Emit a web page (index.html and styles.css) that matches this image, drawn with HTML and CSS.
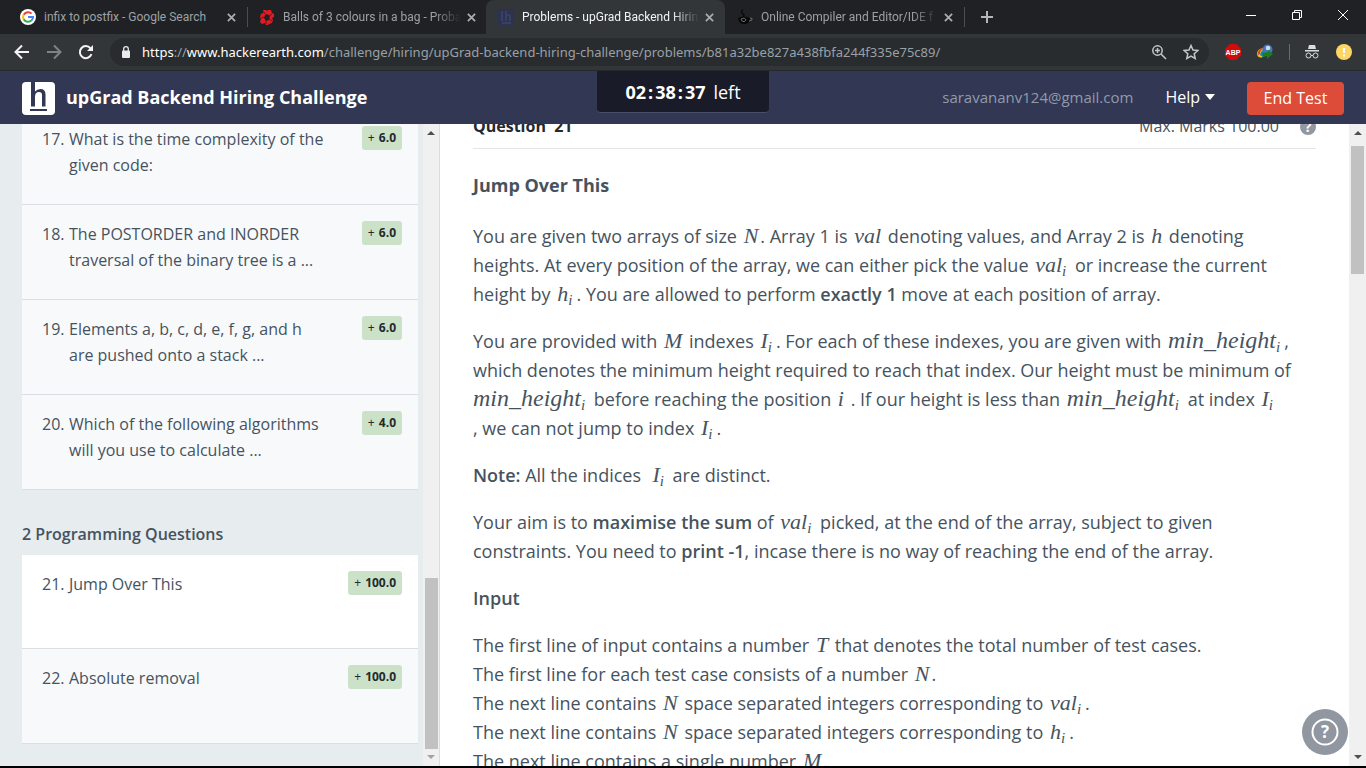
FILE: index.html
```html
<!DOCTYPE html>
<html lang="en">
<head>
<meta charset="utf-8">
<title>Problems - upGrad Backend Hiring Challenge</title>
<link rel="stylesheet" href="styles.css">
</head>
<body>
<div class="tabstrip">
  <div class="tab">
    <svg class="favicon" viewBox="0 0 16 16"><circle cx="8" cy="8" r="8" fill="#fff"/><path d="M11.6 4.6A5 5 0 0 0 3.7 5.7" fill="none" stroke="#ea4335" stroke-width="2"/><path d="M3.7 5.6a5 5 0 0 0 0 4.8" fill="none" stroke="#fbbc05" stroke-width="2"/><path d="M3.7 10.3a5 5 0 0 0 7.6 1.3" fill="none" stroke="#34a853" stroke-width="2"/><path d="M8 8h5a5 5 0 0 1-1.7 3.7" fill="none" stroke="#4285f4" stroke-width="2"/></svg>
    <span class="tab-title">infix to postfix - Google Search</span>
    <button class="tab-close" aria-label="Close tab"><svg viewBox="0 0 10 10"><path d="M1 1l8 8M9 1L1 9"/></svg></button>
  </div>
  <div class="tab divided">
    <svg class="favicon" viewBox="0 0 16 16"><path d="M4 1h3l1 1 1-1h3l1 3 2 1v3l-2 1 1 2-1 3-3 1-1 1H7l-1-2-3 1-2-2 1-3-1-2 1-3 2-1z" fill="#df1c23"/><path d="M8 5l3 2-1 4-3 1-2-3 1-3z" fill="#202124"/><path d="M4 2l2 3M13 5l-3 2M13 12l-3-2M7 15v-3M2 9l3-1" stroke="#7c0d12"/></svg>
    <span class="tab-title fade">Balls of 3 colours in a bag - Proba</span>
    <button class="tab-close" aria-label="Close tab"><svg viewBox="0 0 10 10"><path d="M1 1l8 8M9 1L1 9"/></svg></button>
  </div>
  <div class="tab active">
    <svg class="favicon" viewBox="0 0 16 16"><rect width="16" height="16" rx="2" fill="#2b3254"/><path d="M4 2v10M8 2v10M8 7q4-3 4 1v4M4 14h9" fill="none" stroke="#39415f" stroke-width="2"/></svg>
    <span class="tab-title fade">Problems - upGrad Backend Hirin</span>
    <button class="tab-close" aria-label="Close tab"><svg viewBox="0 0 10 10"><path d="M1 1l8 8M9 1L1 9"/></svg></button>
  </div>
  <div class="tab">
    <svg class="favicon" viewBox="0 0 16 16"><path d="M6 1q-3 2 0 4q2 1 0 3" fill="none" stroke="#080808" stroke-width="1.4"/><path d="M1 9q6-3 12 0q0 6-6 6q-5 0-6-6z" fill="#080808"/><path d="M13 9q3 0 2 2l-3 1M4 10q4-2 5 1q-2 3-4 1z" fill="none" stroke="#686a6c"/></svg>
    <span class="tab-title fade">Online Compiler and Editor/IDE f</span>
    <button class="tab-close" aria-label="Close tab"><svg viewBox="0 0 10 10"><path d="M1 1l8 8M9 1L1 9"/></svg></button>
  </div>
  <div class="tab-end divided"><button class="new-tab" aria-label="New tab"><svg viewBox="0 0 12 12"><path d="M6 0v12M0 6h12"/></svg></button></div>
  <div class="window-controls">
    <button aria-label="Minimize"><svg viewBox="0 0 12 12"><path d="M1 6.5h10"/></svg></button>
    <button aria-label="Restore"><svg viewBox="0 0 12 12"><path d="M1.5 3.5h7v7h-7zM3.500 3.500v-2h7v7h-2"/></svg></button>
    <button aria-label="Close"><svg viewBox="0 0 12 12"><path d="M1 1l10 10M11 1L1 11"/></svg></button>
  </div>
</div>

<div class="toolbar">
  <button class="nav" aria-label="Back"><svg viewBox="0 0 16 16"><path d="M15 8H2M8 1.500L1.500 8 8 14.500"/></svg></button>
  <button class="nav dim" aria-label="Forward"><svg viewBox="0 0 16 16"><path d="M1 8h13M8 1.500L14.500 8 8 14.500"/></svg></button>
  <button class="nav" aria-label="Reload"><svg viewBox="0 0 16 16"><path d="M13.500 10.200A6 6 0 1 1 12.500 4.300"/><path d="M15 1v6H9z" fill="#f1f3f4" stroke="none"/></svg></button>
  <div class="address">
    <svg class="lock" viewBox="0 0 10 12"><path d="M1 4.500h6a1 1 0 0 1 1 1V11a1 1 0 0 1-1 1H1a1 1 0 0 1-1-1V5.500a1 1 0 0 1 1-1z" fill="#e8eaed"/><path d="M1.700 5V3a2.300 2.300 0 0 1 4.600 0v2" fill="none" stroke="#e8eaed" stroke-width="1.300"/></svg>
    <span class="url"><b>https</b>://<b>www.hackerearth.com</b>/challenge/hiring/upGrad-backend-hiring-challenge/problems/b81a32be827a438fbfa244f335e75c89/</span>
    <button class="addr-btn" aria-label="Zoom"><svg viewBox="0 0 16 16"><circle cx="6.500" cy="6.500" r="4.700"/><path d="M10 10l5 5M4 6.500h5M6.500 4v5"/></svg></button>
    <button class="addr-btn" aria-label="Bookmark"><svg viewBox="0 0 16 16"><path d="M8 1.500l2 4.500 4.800.5-3.600 3.200 1 4.800L8 12l-4.200 2.500 1-4.800L1.200 6.500 6 6z"/></svg></button>
  </div>
  <svg class="ext" viewBox="0 0 16 16"><path d="M4.700 0h6.600L16 4.700v6.600L11.300 16H4.700L0 11.300V4.700z" fill="#d00b0b"/><text class="abp" x="8" y="11" text-anchor="middle">ABP</text></svg>
  <svg class="ext" viewBox="0 0 16 16"><path d="M6 4q-6 1-6 6q1 5 6 3z" fill="#e3c51c"/><path d="M5 4Q0 6 1 11l2-1q0-4 3-5z" fill="#d4442b"/><path d="M3 11q0-3 3-5l2 6-2 1z" fill="#1781cb"/><circle cx="10.500" cy="5.500" r="5" fill="#4774b9"/><circle cx="11" cy="4" r="2.300" fill="#c5dcf6"/><path d="M5 9l6-1V6l5 4-6 5v-3l-4 1z" fill="#18801c"/></svg>
  <span class="tool-divider"></span>
  <svg class="ext incognito" viewBox="0 0 16 16"><path d="M5 1h6l1 4H4zM1 6h14v1.500H1z" fill="#dadce0"/><circle cx="4.500" cy="11.500" r="2.500"/><circle cx="11.500" cy="11.500" r="2.500"/><path d="M7 11.500h2"/></svg>
  <svg class="ext" viewBox="0 0 16 16"><circle cx="8" cy="8" r="8" fill="#fdd663"/><path d="M8 4v5M8 10.500v2" stroke="#fff" stroke-width="2"/></svg>
</div>

<header class="site-header">
  <svg class="logo" viewBox="0 0 33 33"><rect width="33" height="33" rx="4" fill="#fff"/><path d="M9 0h4v9.500q2-2.500 5.500-2.500 5 0 5 5.500v12h-3.500V13q0-3-3-3-4 0-4 5v9.500H9V2z" fill="#323754"/><path d="M8 27h17v2H8z" fill="#323754"/></svg>
  <h1 class="challenge">upGrad Backend Hiring Challenge</h1>
  <div class="timer"><strong>02<span class="colon">:</span>38<span class="colon">:</span>37</strong><span>left</span></div>
  <span class="email">saravananv124@gmail.com</span>
  <button class="help">Help <svg viewBox="0 0 10 6"><path d="M0 0h10L5 6z" fill="#fff"/></svg></button>
  <button class="end-test">End Test</button>
</header>

<main class="panes">
  <nav class="sidebar">
    <div class="questions">
      <a class="q" href="#q17"><span class="num">17.</span><span class="name">What is the time complexity of the<br>given code:</span><span class="mark">+ <b>6.0</b></span></a>
      <a class="q" href="#q18"><span class="num">18.</span><span class="name">The POSTORDER and INORDER<br>traversal of the binary tree is a ...</span><span class="mark">+ <b>6.0</b></span></a>
      <a class="q" href="#q19"><span class="num">19.</span><span class="name">Elements a, b, c, d, e, f, g, and h<br>are pushed onto a stack ...</span><span class="mark">+ <b>6.0</b></span></a>
      <a class="q" href="#q20"><span class="num">20.</span><span class="name">Which of the following algorithms<br>will you use to calculate ...</span><span class="mark">+ <b>4.0</b></span></a>
      <h2 class="group">2 Programming Questions</h2>
      <a class="q current" href="#q21"><span class="num">21.</span><span class="name">Jump Over This</span><span class="mark">+ <b>100.0</b></span></a>
      <a class="q" href="#q22"><span class="num">22.</span><span class="name">Absolute removal</span><span class="mark">+ <b>100.0</b></span></a>
    </div>
  </nav>
  <div class="scrollbar at-end"><i class="arrow up"></i><i class="thumb"></i><i class="arrow down"></i></div>
  <article class="problem">
    <div class="problem-body">
      <div class="problem-head">
        <strong>Question &nbsp;21</strong><span class="max">Max. Marks 100.00</span>
        <svg class="hint" viewBox="0 0 16 16"><circle cx="8" cy="8" r="8" fill="#9298a1"/><text class="hint-mark" x="8" y="13" text-anchor="middle">?</text></svg>
      </div>
      <h2 class="title">Jump Over This</h2>
      <p>You are given two arrays of size <var>N</var>. Array 1 is <var>val</var> denoting values, and Array 2 is <var>h</var> denoting<br>heights. At every position of the array, we can either pick the value <var>val<sub>i</sub></var> or increase the current<br>height by <var>h<sub>i</sub></var>. You are allowed to perform <b>exactly 1</b> move at each position of array.</p>
      <p>You are provided with <var>M</var> indexes <var>I<sub>i</sub></var>. For each of these indexes, you are given with <var class="long">min_height<sub>i</sub></var>,<br>which denotes the minimum height required to reach that index. Our height must be minimum of<br><var class="long">min_height<sub>i</sub></var> before reaching the position <var>i</var> . If our height is less than <var class="long">min_height<sub>i</sub></var> at index <var>I<sub>i</sub></var><br>, we can not jump to index <var>I<sub>i</sub></var>.</p>
      <p><b>Note:</b> All the indices &nbsp;<var>I<sub>i</sub></var> are distinct.</p>
      <p>Your aim is to <b>maximise the sum</b> of <var>val<sub>i</sub></var> picked, at the end of the array, subject to given<br>constraints. You need to <b>print -1</b>, incase there is no way of reaching the end of the array.</p>
      <p><b>Input</b></p>
      <p>The first line of input contains a number <var>T</var> that denotes the total number of test cases.<br>The first line for each test case consists of a number <var>N</var>.<br>The next line contains <var>N</var> space separated integers corresponding to <var>val<sub>i</sub></var>.<br>The next line contains <var>N</var> space separated integers corresponding to <var>h<sub>i</sub></var>.<br>The next line contains a single number <var>M</var>.</p>
    </div>
    <button class="support" aria-label="Support"><svg viewBox="0 0 28 28"><circle cx="14" cy="14" r="12.500" fill="none" stroke="#fff" stroke-width="2"/><text class="support-mark" x="14" y="20" text-anchor="middle">?</text></svg></button>
  </article>
  <div class="scrollbar at-start"><i class="arrow up"></i><i class="thumb"></i><i class="arrow down"></i></div>
</main>
<div class="bottom-edge"></div>
</body>
</html>
```
FILE: styles.css
```css
* { box-sizing: border-box; }
body { margin: 0; height: 100vh; display: flex; flex-direction: column; overflow: hidden; font-family: "Open Sans", sans-serif; color: #46535e; background: #fff; }
button { border: 0; padding: 0; background: none; font-family: inherit; color: inherit; }
svg { display: block; flex: none; }

.tabstrip { height: 34px; flex: none; display: flex; background: #202124; padding-left: 8px; font-family: Roboto, "Open Sans", sans-serif; font-size: 12px; color: #9da1a6; }
.tab { width: 239px; min-width: 0; display: flex; align-items: center; padding: 0 9px 0 12px; position: relative; }
.divided { position: relative; }
.divided::before { content: ""; position: absolute; left: 0; top: 7px; height: 20px; width: 1px; background: #4a4d51; }
.active { background: #323639; color: #f1f3f4; border-radius: 8px 8px 0 0; }
.favicon { width: 16px; height: 16px; margin-right: 8px; }
.tab-title { flex: 1; white-space: nowrap; }
.fade { -webkit-mask-image: linear-gradient(to right, #000 85%, transparent); mask-image: linear-gradient(to right, #000 85%, transparent); }
.tab-close { margin-left: 4px; padding: 2px; }
.tab-close svg { width: 9px; height: 9px; stroke: #a9acb0; stroke-width: 2; }
.tab-end { display: flex; align-items: center; padding-left: 17px; }
.new-tab svg { width: 12px; height: 12px; stroke: #b4b7ba; stroke-width: 2; }
.window-controls { margin-left: auto; display: flex; height: 29px; }
.window-controls button { width: 46px; display: grid; place-items: center; }
.window-controls svg { width: 12px; height: 12px; fill: none; stroke: #fff; }

.toolbar { height: 37px; flex: none; display: flex; align-items: center; background: #323639; border-bottom: 1px solid #26282b; padding: 0 14px; }
.nav { width: 32px; flex: none; }
.nav svg { width: 16px; height: 16px; fill: none; stroke: #f1f3f4; stroke-width: 2; }
.dim svg { stroke: #7f8386; }
.address { flex: 1; min-width: 0; height: 28px; border-radius: 14px; background: #282c2f; display: flex; align-items: center; padding: 0 10px 0 12px; margin-right: 16px; }
.lock { width: 10px; height: 12px; margin-right: 10px; }
.url { flex: 1; font-family: "Noto Sans", sans-serif; font-size: 13px; color: #9aa0a6; white-space: nowrap; }
.url b { font-weight: 400; color: #fff; }
.addr-btn { margin-left: 16px; }
.addr-btn svg { width: 16px; height: 16px; fill: none; stroke: #c3c6c9; stroke-width: 1.500; }
.ext { width: 16px; height: 16px; margin-right: 16px; }
.ext:last-child { margin-right: 0; }
.abp { font: 700 7px "Liberation Sans", sans-serif; fill: #fff; }
.tool-divider { width: 1px; height: 16px; background: #686b6e; margin-right: 14px; }
.incognito circle, .incognito path:last-child { fill: none; stroke: #dadce0; }

.site-header { height: 53px; flex: none; display: flex; align-items: center; background: #323754; color: #fff; padding: 2px 22px 0; position: relative; }
.logo { width: 33px; height: 33px; margin-right: 11px; }
.challenge { margin: 0; padding-bottom: 4px; font-size: 18px; line-height: 24px; font-weight: 700; }
.timer { position: absolute; left: 50%; top: 0; width: 172px; height: 42px; transform: translateX(-50%); background: #1a1b29; border-radius: 0 0 4px 4px; border-bottom: 1px solid #4a4e68; display: flex; justify-content: center; gap: 8px; font-size: 18px; line-height: 43px; }
.colon { margin: 0 2px; }
.email { margin-left: auto; padding-bottom: 4px; font-size: 15px; color: #8f9bab; }
.help { display: flex; align-items: center; gap: 5px; margin: 0 32px; padding-bottom: 4px; font-size: 16px; }
.help svg { width: 10px; height: 6px; }
.end-test { width: 97px; height: 33px; padding-bottom: 2px; border-radius: 4px; background: #dd4b39; font-size: 16px; color: #fff; }

.panes { flex: 1; min-height: 0; display: flex; }
.sidebar { width: 423px; flex: none; background: #e7ecee; overflow: hidden; display: flex; flex-direction: column; justify-content: flex-end; padding: 0 5px 22px 22px; }
.questions { flex: none; }
.q { display: flex; align-items: flex-start; min-height: 95px; padding: 16px 16px 26px 20px; background: #f8f9fb; border-bottom: 1px solid #dcdfe1; color: #46535e; text-decoration: none; font-size: 16px; line-height: 26px; font-weight: 500; }
.q.current { background: #fff; min-height: 94px; }
.num { width: 27px; flex: none; }
.name { flex: 1; white-space: nowrap; }
.mark { height: 24px; padding: 0 6px; border-radius: 3px; background: #cbe2c8; color: #24292e; font-size: 12px; line-height: 24px; }
.mark b { font-weight: 700; margin-left: 1px; }
.group { margin: 0; padding: 32px 0 9px; font-size: 16px; line-height: 24px; font-weight: 600; }

.scrollbar { width: 17px; flex: none; display: flex; flex-direction: column; align-items: center; background: #f0f0f0; padding: 7px 0; border-right: 1px solid #dcdcdc; }
.thumb { width: 13px; background: #c1c1c1; }
.arrow { border: 4px solid transparent; width: 0; height: 0; }
.up { border-top: 0; border-bottom-color: #505050; }
.down { border-bottom: 0; border-top-color: #505050; }
.at-end .thumb { margin-top: auto; margin-bottom: 6px; height: 171px; }
.at-end .down { border-top-color: #a3a3a3; }
.at-start { border-right: 0; }
.at-start .thumb { margin-top: 11px; margin-bottom: auto; height: 128px; }

.problem { flex: 1; min-width: 0; overflow: hidden; position: relative; padding: 0 33px; }
.problem-body { margin-top: -10px; font-size: 18px; line-height: 29px; }
.problem-head { display: flex; align-items: center; height: 35px; padding-bottom: 9px; border-bottom: 1px solid #e5e5e5; font-size: 16px; color: #24292e; }
.max { margin-left: auto; color: #46535e; }
.hint { width: 16px; height: 16px; margin-left: 21px; }
.hint-mark { font: 700 14px "Open Sans", sans-serif; fill: #fff; }
.title { margin: 22px 0; font-size: 18px; line-height: 29px; font-weight: 700; }
.problem p { margin: 0 0 18px; white-space: nowrap; }
.problem b { font-weight: 600; }
.problem var { font-family: "Liberation Serif", serif; font-style: italic; font-size: 22px; line-height: 20px; margin: 0 2px; }
.problem .long { font-size: 24px; }
.problem br + .long { margin-left: 0; }
.problem sub { font-size: 15px; line-height: 0; vertical-align: -4px; margin-right: 2px; }
.support { position: absolute; right: 1px; bottom: 11px; width: 46px; height: 46px; border-radius: 50%; background: #9097a0; display: grid; place-items: center; }
.support svg { width: 28px; height: 28px; }
.support-mark { font: 700 17px "Open Sans", sans-serif; fill: #fff; }
.bottom-edge { height: 2px; flex: none; background: #000; }
```
